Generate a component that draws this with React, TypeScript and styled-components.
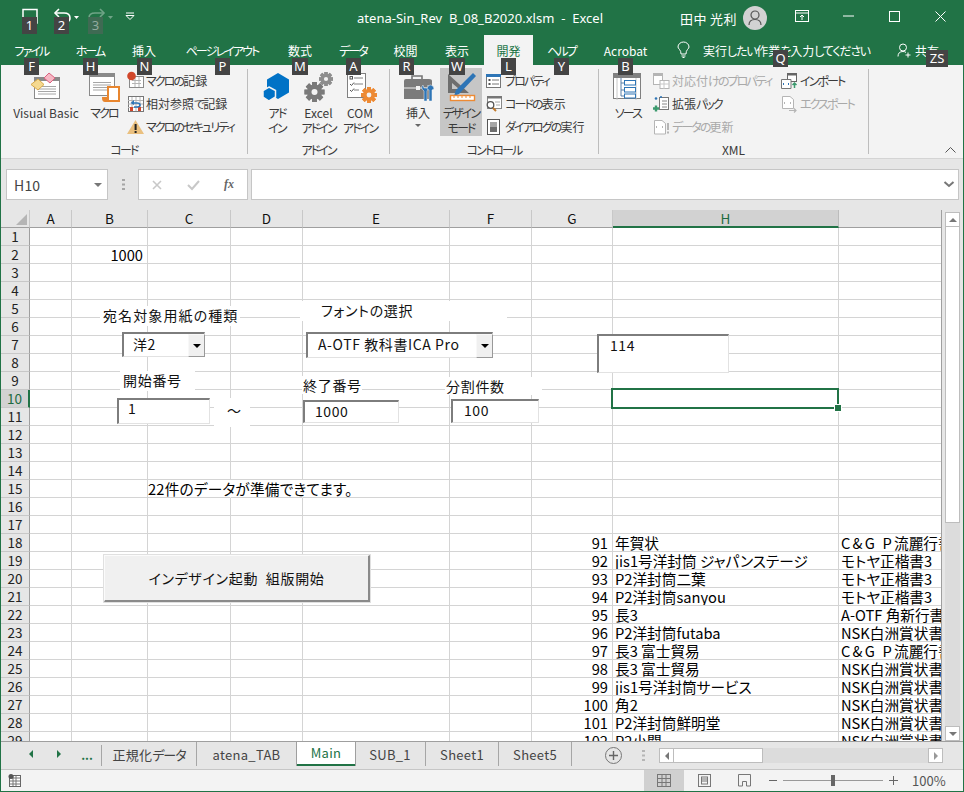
import React from "react";
import styled, { createGlobalStyle, css } from "styled-components";

const GREEN = "#217346";
const UI = `"Noto Sans CJK JP","Noto Sans",sans-serif`;

const Global = createGlobalStyle`
  html, body { margin: 0; padding: 0; background: #fff; }
  * { box-sizing: border-box; }
  body { font-family: ${UI}; font-feature-settings: "palt"; }
  svg { display: block; overflow: visible; }
`;

const Win = styled.div`
  position: relative; width: 964px; height: 792px; overflow: hidden;
  border: solid ${GREEN}; border-width: 0 1px 1px 1px;
  display: flex; flex-direction: column; background: #e6e6e6;
`;

/* kana in the ribbon's UI face are narrower than the kanji */
const NarrowRun = styled.span`letter-spacing: -1.9px;`;
const N = ({ children }: { children: string }) => (
  <>
    {children.split(/([ァ-ヶーぁ-ゖ]+)/).map((s, i) => (i % 2 ? <NarrowRun key={i}>{s}</NarrowRun> : s))}
  </>
);

/* ---------- title bar ---------- */
const TitleBar = styled.div`
  height: 36px; background: ${GREEN}; color: #fff; flex: none;
  display: grid; grid-template-columns: 356px 323px 1fr; align-items: center;
`;
const Qat = styled.div`display: flex; align-items: center; padding: 0 0 4px 21px;`;
const QatBtn = styled.div<{ $w: number; $faded?: boolean }>`
  width: ${p => p.$w}px; display: flex; align-items: center; opacity: ${p => (p.$faded ? 0.35 : 1)};
`;
const TitleText = styled.div`
  font: 13px "Noto Sans", sans-serif; white-space: pre; letter-spacing: 0.02px; padding-bottom: 1px;
`;
const TitleRight = styled.div`display: flex; align-items: center; justify-content: flex-start;`;
const UserName = styled.div`font-size: 13px; width: 63px; letter-spacing: 0.4px; white-space: pre;`;
const Avatar = styled.div`
  width: 24px; height: 24px; border-radius: 50%; background: #d2d2d2; margin-right: 12px;
  display: flex; align-items: center; justify-content: center;
`;
const WinBtn = styled.div`width: 46px; height: 36px; display: flex; align-items: center; justify-content: center; padding-bottom: 4px;`;

/* ---------- ribbon tabs ---------- */
const TabRow = styled.div`
  height: 29px; background: ${GREEN}; color: #fff; display: flex; flex: none; font-size: 12px; position: relative;
`;
const RTab = styled.div<{ $w: number; $active?: boolean }>`
  width: ${p => p.$w}px; height: 29px; display: flex; align-items: center; justify-content: center; white-space: pre; padding-bottom: 1px;
  ${p => p.$active && css`
    background: #f3f3f3; color: ${GREEN}; height: 30px; margin-top: -1px; padding-bottom: 0; margin-left: 1px;
  `}
`;
const TellMe = styled.div`
  display: flex; align-items: center; margin-left: 16px; width: 220px; white-space: pre; padding-bottom: 1px;
`;
const TellText = styled.span`margin-left: 13px;`;
const TellKana = styled.span`letter-spacing: -1.2px;`;
const Share = styled.div`display: flex; align-items: center; gap: 4px; padding-bottom: 1px;`;

/* ---------- ribbon ---------- */
const Ribbon = styled.div`
  height: 94px; flex: none; background: #f3f3f3; border-bottom: 1px solid #d4d4d4;
  display: flex; padding-top: 4px; color: #3a3a3a; font-size: 12px; position: relative;
`;
const Group = styled.div<{ $w: number }>`
  width: ${p => p.$w}px; height: 85px; border-right: 1px solid #bdbdbd;
  display: flex; flex-direction: column; flex: none;
`;
const GroupBody = styled.div<{ $pad: number }>`
  height: 74px; display: flex; padding-left: ${p => p.$pad}px;
`;
const GroupLabel = styled.div`
  height: 11px; line-height: 13px; text-align: center; font-size: 12px; white-space: pre;
`;
const Large = styled.div<{ $w: number; $on?: boolean; $mr?: number }>`
  width: ${p => p.$w}px; height: 68px; flex: none; display: flex; flex-direction: column; align-items: center;
  margin-top: -1px; margin-right: ${p => p.$mr ?? 0}px;
  ${p => p.$on && css`background: #c6c6c6;`}
`;
const LargeIcon = styled.div`height: 37px; width: 100%; display: flex; justify-content: center; padding-top: 2px;`;
const LargeLabel = styled.div`line-height: 15px; text-align: center; white-space: pre;`;
const Caret = styled.div`
  width: 0; height: 0; border: 3px solid transparent; border-top: 3px solid #666; border-bottom: 0; margin-top: 4px;
`;
const Stack = styled.div<{ $w?: number; $ml?: number }>`
  display: flex; flex-direction: column; margin-left: ${p => p.$ml ?? 0}px;
  ${p => p.$w && css`width: ${p.$w}px;`}
`;
const SmallRow = styled.div<{ $off?: boolean }>`
  height: 23px; display: flex; align-items: center; white-space: nowrap; gap: 3px;
  color: ${p => (p.$off ? "#a9a9a9" : "#3a3a3a")};
`;
const Collapse = styled.div`position: absolute; right: 7px; bottom: 5px;`;

/* ---------- key tips ---------- */
const Tip = styled.div<{ $x: number; $y: number; $w: number; $faded?: boolean }>`
  position: absolute; left: ${p => p.$x - 1}px; top: ${p => p.$y}px; width: ${p => p.$w}px; height: 17px;
  background: #444; color: #fff; font: 13px/17px "Noto Sans", sans-serif; text-align: center;
  ${p => p.$faded && css`background: #3f6a53; color: #93ab9f;`}
  z-index: 5;
`;

/* ---------- formula bar ---------- */
const FormulaBar = styled.div`
  height: 51px; flex: none; background: #e6e6e6; padding: 10px 4px 0 5px; display: flex; align-items: flex-start;
`;
const NameBox = styled.div`
  width: 102px; height: 31px; background: #fff; border: 1px solid #c6c6c6; display: flex; align-items: center;
  justify-content: space-between; padding: 0 5px 0 7px; font-size: 14px; color: #444; letter-spacing: 0.2px;
`;
const DownCaret = styled.div`width: 0; height: 0; border: 4px solid transparent; border-top: 4px solid #777; border-bottom: 0;`;
const GripZone = styled.div`width: 30px; height: 31px; display: flex; align-items: center; justify-content: center;`;
const FxBox = styled.div`
  width: 110px; height: 31px; background: #fff; border: 1px solid #c6c6c6; display: flex; align-items: center; margin-right: 3px;
`;
const FxSlot = styled.div`width: 36px; display: flex; justify-content: center;`;
const FxText = styled.span`font: italic 700 12px "Liberation Serif", serif; color: #666;`;
const FormulaInput = styled.div`
  flex: 1; height: 31px; background: #fff; border: 1px solid #c6c6c6; display: flex; align-items: center; justify-content: flex-end; padding-right: 3px;
`;

/* ---------- sheet ---------- */
const SheetZone = styled.div`
  height: 532px; flex: none; display: flex; position: relative; background: #e6e6e6; border-bottom: 1px solid #9f9f9f;
`;
const Grid = styled.div`
  width: 941px; height: 531px; overflow: hidden; flex: none; border-right: 1px solid #9f9f9f;
  display: grid; grid-template-columns: 29px 42px 76px 83px 72px 147px 82px 81px 226px 103px;
  grid-auto-rows: 18px; background: #fff; color: #000;
`;
const ColHead = styled.div<{ $sel?: boolean }>`
  background: ${p => (p.$sel ? "#d2d2d2" : "#e6e6e6")}; color: ${p => (p.$sel ? "#1d6a40" : "#111")};
  border-right: 1px solid ${p => (p.$sel ? "#bcbcbc" : "#c8c8c8")};
  border-bottom: ${p => (p.$sel ? `2px solid ${GREEN}` : "1px solid #9f9f9f")};
  font-size: 13.5px; line-height: 17px; text-align: center;
`;
const Corner = styled.div`
  background: #e6e6e6; border-right: 1px solid #c8c8c8; border-bottom: 1px solid #9f9f9f; position: relative;
  display: flex; align-items: flex-end; justify-content: flex-end; padding: 0 2px 2px 0;
`;
const CornerTri = styled.div`width: 0; height: 0; border-style: solid; border-width: 0 0 11px 11px; border-color: transparent transparent #b5b5b5 transparent;`;
const RowHead = styled.div<{ $sel?: boolean }>`
  background: ${p => (p.$sel ? "#d2d2d2" : "#e6e6e6")}; color: ${p => (p.$sel ? "#1d6a40" : "#222")};
  border-right: ${p => (p.$sel ? `2px solid ${GREEN}` : "1px solid #9f9f9f")};
  border-bottom: 1px solid #c8c8c8;
  font-size: 13.5px; line-height: 17px; text-align: center;
`;
const Cell = styled.div<{ $right?: boolean; $spill?: boolean }>`
  border-right: 1px solid ${p => (p.$spill ? "transparent" : "#d4d4d4")}; border-bottom: 1px solid #d4d4d4;
  font-size: 14.67px; line-height: 18px; white-space: pre; padding: 0 ${p => (p.$right ? 4 : 2)}px 0 ${p => (p.$spill ? 0 : 2)}px;
  text-align: ${p => (p.$right ? "right" : "left")};
  overflow: ${p => (p.$spill ? "visible" : "hidden")}; position: relative;
`;
const WideLatin = styled.span`letter-spacing: 2.2px;`;
const SpillText = styled.span`letter-spacing: 0.2px;`;

/* over-the-sheet form controls */
const Float = styled.div<{ $x: number; $y: number; $w: number; $h: number }>`
  position: absolute; left: ${p => p.$x - 1}px; top: ${p => p.$y - 210}px; width: ${p => p.$w}px; height: ${p => p.$h}px;
`;
const FormLabel = styled(Float)<{ $pl: number; $ls?: number }>`
  background: #fff; color: #111; font-size: 14px; line-height: 18px; padding-left: ${p => p.$pl}px; white-space: nowrap; letter-spacing: ${p => p.$ls ?? 0.7}px;
`;
const Inset = styled(Float)`
  background: #fff; color: #111; font-size: 14px; white-space: nowrap;
  border-style: solid; border-width: 2px 1px 1px 2px; border-color: #7d7d7d #e2e2e2 #e2e2e2 #7d7d7d;
`;
const FieldText = styled.div<{ $pl: number; $lh?: number }>`padding-left: ${p => p.$pl}px; letter-spacing: 0.6px; line-height: ${p => p.$lh ?? 18}px;`;
const ComboBtn = styled.div`
  position: absolute; right: -1px; top: 0; bottom: -1px; width: 17px; background: #f0f0f0; border: 1px solid;
  border-color: #f8f8f8 #999 #999 #f8f8f8; display: flex; align-items: center; justify-content: center;
`;
const BlackCaret = styled.div`width: 0; height: 0; border: 4px solid transparent; border-top: 4px solid #000; border-bottom: 0;`;
const BigButton = styled(Float)`
  background: #f0f0f0; border-style: solid; border-width: 1px 2px 2px 1px; border-color: #fbfbfb #8a8a8a #8a8a8a #fbfbfb;
  box-shadow: 0 0 0 1px #e0e0e0; display: flex; align-items: center; justify-content: center; font-size: 14px; color: #111; white-space: pre; letter-spacing: 0.7px;
`;
const Selection = styled(Float)`
  border: 2px solid ${GREEN}; background: transparent;
`;
const Handle = styled.div`
  position: absolute; right: -4px; bottom: -4px; width: 6px; height: 6px; background: ${GREEN}; border: 1px solid #fff; box-sizing: content-box; margin: -1px;
`;

const VScroll = styled.div`
  position: absolute; left: 944px; top: 2px; width: 15px; height: 529px; display: flex; flex-direction: column; background: #dcdcdc;
`;
const ScrollEnd = styled.div`
  flex: none; width: 15px; height: 15px; background: #fff; border: 1px solid #bdbdbd; display: flex; align-items: center; justify-content: center;
`;
const UpTri = styled.div`width: 0; height: 0; border: 4px solid transparent; border-bottom: 4px solid #777; border-top: 0;`;
const DownTri = styled.div`width: 0; height: 0; border: 4px solid transparent; border-top: 4px solid #777; border-bottom: 0;`;
const VThumb = styled.div`height: 296px; flex: none; background: #fff; border: 1px solid #bdbdbd; border-top: 0;`;
const VTrack = styled.div`flex: 1;`;

/* ---------- sheet tabs ---------- */
const TabBar = styled.div`
  height: 28px; flex: none; background: #e6e6e6; border-bottom: 1px solid #c6c6c6; display: flex; align-items: flex-start; color: #444; padding-left: 15px;
`;
const NavBtn = styled.div<{ $w: number }>`
  width: ${p => p.$w}px; height: 22px; margin-top: 1px; display: flex; align-items: center; justify-content: center; color: ${GREEN}; font-weight: 700; font-size: 12px;
`;
const TriL = styled.div`width: 0; height: 0; border: 4px solid transparent; border-right: 4px solid ${GREEN}; border-left: 0;`;
const TriR = styled.div`width: 0; height: 0; border: 4px solid transparent; border-left: 4px solid ${GREEN}; border-right: 0;`;
const SheetTab = styled.div<{ $w: number; $active?: boolean }>`
  width: ${p => p.$w}px; flex: none; height: 24px; display: flex; align-items: center; justify-content: center; font-size: 13px; margin-top: 0; letter-spacing: 0.3px;
  border-right: 1px solid #a6a6a6;
  ${p => p.$active && css`
    background: #fff; color: ${GREEN}; border-right: 0; border-bottom: 2px solid ${GREEN}; margin-top: -1px; height: 25px; box-shadow: -1px 0 0 #9f9f9f, 1px 0 0 #9f9f9f;
  `}
`;
const TabKana = styled.span`letter-spacing: -1px;`;
const FirstSep = styled.div`width: 1px; height: 21px; margin-top: 3px; background: #a6a6a6; flex: none;`;
const AddBtn = styled.div`
  margin-left: 33px; margin-top: 5px; width: 17px; height: 17px; border-radius: 50%; border: 1px solid #777; color: #555;
  display: flex; align-items: center; justify-content: center; flex: none;
`;
const Grip = styled.div`margin-left: 20px; margin-top: 8px; flex: none;`;
const HScroll = styled.div`
  margin-left: 14px; margin-top: 6px; width: 284px; height: 15px; background: #dcdcdc; display: flex; flex: none;
`;
const HEnd = styled.div`flex: none; width: 15px; height: 15px; background: #fff; border: 1px solid #bdbdbd; display: flex; align-items: center; justify-content: center;`;
const HThumb = styled.div`flex: none; width: 89px; background: #fff; border: 1px solid #bdbdbd; border-left: 0;`;
const HTrack = styled.div`flex: 1;`;
const SmTriL = styled.div`width: 0; height: 0; border: 4px solid transparent; border-right: 4px solid #777; border-left: 0;`;
const SmTriR = styled.div`width: 0; height: 0; border: 4px solid transparent; border-left: 4px solid #999; border-right: 0;`;

/* ---------- status bar ---------- */
const Status = styled.div`
  flex: 1; background: #f3f3f3; display: flex; align-items: center; color: #555; padding-left: 7px; font-size: 13px;
`;
const StatusSpacer = styled.div`flex: 1;`;
const ViewBtn = styled.div<{ $on?: boolean }>`
  width: 40px; height: 21px; display: flex; align-items: center; justify-content: center; background: ${p => (p.$on ? "#d0d0d0" : "transparent")};
`;
const Zoom = styled.div`display: flex; align-items: center; margin-left: 5px;`;
const ZoomBar = styled.div`width: 100px; height: 1px; background: #999; margin: 0 6px; position: relative; display: flex; justify-content: center; align-items: center;`;
const ZoomKnob = styled.div`width: 4px; height: 11px; background: #666;`;
const Percent = styled.div`width: 53px; margin-left: 12px; font-size: 13px; padding-left: 2px; color: #555;`;

/* ---------- icons ---------- */
const Ic = ({ w = 16, h = 16, children }: { w?: number; h?: number; children: React.ReactNode }) => (
  <svg width={w} height={h} viewBox={`0 0 ${w} ${h}`}>{children}</svg>
);

const Gear = ({ cx, cy, r, c, hole = "#f3f3f3" }: { cx: number; cy: number; r: number; c: string; hole?: string }) => {
  const teeth = Array.from({ length: 8 }, (_, i) => i * 45);
  const tw = r * 0.48;
  return (
    <g>
      {teeth.map(a => (
        <rect key={a} x={cx - tw / 2} y={cy - r} width={tw} height={r * 2} fill={c} transform={`rotate(${a} ${cx} ${cy})`} />
      ))}
      <circle cx={cx} cy={cy} r={r * 0.55} fill="none" stroke={c} strokeWidth={r * 0.4} />
      <circle cx={cx} cy={cy} r={r * 0.3} fill={hole} />
    </g>
  );
};

const TableLines = ({ x, y, w, h, c = "#a6a6a6" }: { x: number; y: number; w: number; h: number; c?: string }) => {
  const rows = 4;
  return (
    <g stroke={c} strokeWidth="1">
      {Array.from({ length: rows }, (_, i) => (
        <line key={i} x1={x + 3} x2={x + w - 3} y1={y + 2.5 + (i * (h - 4)) / rows} y2={y + 2.5 + (i * (h - 4)) / rows} />
      ))}
    </g>
  );
};

const VbIcon = () => (
  <Ic w={32} h={32}>
    <rect x="4.5" y="7.5" width="25" height="21" fill="#fff" stroke="#8a8a8a" />
    <rect x="4" y="7" width="26" height="4" fill="#8a8a8a" />
    <TableLines x={5} y={14} w={24} h={14} />
    <path d="M8 9 L14 14.5 L8 20 L1 14.5Z" fill="#f5d98f" stroke="#d9a948" />
    <path d="M19 3 L25 8 L20 13 L14 8Z" fill="#f7b7c4" stroke="#d9627f" />
  </Ic>
);
const MacroIcon = () => (
  <Ic w={32} h={32}>
    <rect x="1.5" y="3.5" width="25" height="22" fill="#fff" stroke="#8a8a8a" />
    <rect x="1" y="3" width="26" height="4" fill="#8a8a8a" />
    <TableLines x={2} y={10} w={24} h={14} />
    <path d="M20 17 H31 V31 H17 Q15 31 15 28 H19 Q20 28 20 26Z" fill="#fff" stroke="#e8862f" strokeWidth="2" />
    <rect x="15" y="27" width="6" height="4" fill="#e8862f" />
  </Ic>
);
const RecIcon = () => (
  <Ic>
    <rect x="2.5" y="3.5" width="14" height="11" fill="#fff" stroke="#8a8a8a" />
    <path d="M5 7.5h9M5 10.5h9M8 4v10M12 4v10" stroke="#b5b5b5" fill="none" />
    <circle cx="4.5" cy="3" r="4.3" fill="#d1462a" />
  </Ic>
);
const RelIcon = () => (
  <Ic>
    <rect x="1.5" y="0.5" width="15" height="15" fill="#fff" stroke="#777" />
    <path d="M1 4.5h15M1 8h15M1 11.5h15M5 1v14M9 1v14M13 1v14" stroke="#b5b5b5" fill="none" />
    <rect x="3" y="11" width="3" height="4" fill="#d1462a" />
    <rect x="11" y="11" width="3" height="4" fill="#d1462a" />
    <path d="M5 7 H10 Q13 7 13 9 Q13 11 10 11 H7" fill="none" stroke="#2e75b6" strokeWidth="1.6" />
    <path d="M7 4 L3.5 7 L7 9Z" fill="#2e75b6" />
  </Ic>
);
const WarnIcon = () => (
  <Ic>
    <path d="M8.5 1 L17 15 H0Z" fill="#eac07f" />
    <rect x="7.6" y="5" width="2" height="6" fill="#222" />
    <rect x="7.6" y="12" width="2" height="2" fill="#222" />
  </Ic>
);
const AddinIcon = () => (
  <Ic w={32} h={32}>
    <path d="M17 3 L28 9.5 V22.5 L17 29 L6 22.5 V9.5Z" fill="#0072c6" />
    <path d="M8 17 L14.5 20.5 V27 L8 31 L2 27 V20.5Z" fill="#0072c6" stroke="#f3f3f3" strokeWidth="1.5" />
  </Ic>
);
const GearsIcon = () => (
  <Ic w={32} h={32}>
    <Gear cx={11.5} cy={22} r={10} c="#7a7a7a" />
    <Gear cx={23} cy={9} r={7} c="#8e8e8e" />
  </Ic>
);
const ComIcon = () => (
  <Ic w={32} h={32}>
    <rect x="3.5" y="3.5" width="18" height="24" fill="#fff" stroke="#808080" />
    <path d="M10 8h9M10 14h9M10 20h5" stroke="#808080" fill="none" />
    <rect x="6" y="6.5" width="2.5" height="2.5" fill="none" stroke="#555" />
    <path d="M6 14l1.5 1.5L10 12.5M6 20l1.5 1.5L10 18.5" stroke="#555" fill="none" />
    <Gear cx={25} cy={25} r={8} c="#ed8a34" />
  </Ic>
);
const ToolboxIcon = () => (
  <Ic w={34} h={32}>
    <path d="M11 9 V6 H21 V9" fill="none" stroke="#777" strokeWidth="1.6" />
    <path d="M3 11 Q3 9 5 9 H28 Q31 9 31 11 V29 H3Z" fill="#7b7b7b" />
    <path d="M3 18 H31" stroke="#f3f3f3" strokeWidth="1" />
    <rect x="15" y="16" width="4" height="4" fill="#f3f3f3" />
    <path d="M22 15 q-3 3 1 6 v10 h3 v-10 q3 -3 1 -6 v3 h-4z" fill="#2e75b6" stroke="#f3f3f3" strokeWidth=".5" />
    <path d="M30 15 q3 1 3 4 l-2 1 v11 h-3 v-11 l-2 -1 q0 -3 3 -4z" fill="#2e75b6" stroke="#f3f3f3" strokeWidth=".5" />
  </Ic>
);
const DesignIcon = () => (
  <Ic w={32} h={32}>
    <path d="M3 4 L24 23 H3Z M7 13 V19 H14Z" fill="#6e6e6e" fillRule="evenodd" />
    <path d="M28 3 L31 6 L14 24 L9 26 L11 20Z" fill="#2e75b6" />
    <rect x="5.5" y="25.5" width="24" height="5" fill="#fff" stroke="#ed8a34" strokeWidth="1.4" />
    <path d="M9 26v2M13 26v2M17 26v2M21 26v2M25 26v2" stroke="#ed8a34" />
  </Ic>
);
const PropsIcon = () => (
  <Ic>
    <rect x=".5" y="1.5" width="14" height="13" fill="#fff" stroke="#777" />
    <rect x="0" y="1" width="15" height="3" fill="#2e75b6" />
    <rect x="2.5" y="6" width="2" height="2" fill="#555" />
    <rect x="2.5" y="10" width="2" height="2" fill="#555" />
    <path d="M6 7h7M6 11h7" stroke="#777" />
  </Ic>
);
const CodeIcon = () => (
  <Ic>
    <rect x="1.5" y=".5" width="14" height="12" fill="#fff" stroke="#888" />
    <rect x="1" y="0" width="15" height="2.5" fill="#777" />
    <circle cx="4.5" cy="9" r="3.3" fill="#fff" stroke="#555" strokeWidth="1.3" />
    <path d="M7 12 L10 15" stroke="#c17a2c" strokeWidth="2" />
    <path d="M9 6h5M10 9h4" stroke="#aaa" />
  </Ic>
);
const DialogIcon = () => (
  <Ic>
    <rect x="1.5" y=".5" width="12" height="15" fill="#fff" stroke="#555" />
    <rect x="4" y="3" width="7" height="10" fill="#a6a6a6" />
    <rect x="4" y="8" width="7" height="5" fill="#6e6e6e" />
  </Ic>
);
const SourceIcon = () => (
  <Ic w={32} h={32}>
    <rect x="1.5" y="3.5" width="27" height="25" fill="#fff" stroke="#808080" />
    <rect x="1" y="3" width="28" height="5" fill="#808080" />
    <path d="M5 8v22M24 8v22" stroke="#c8c8c8" />
    <path d="M9 8 V26 H12 M9 13 H12 M9 20 H12" fill="none" stroke="#5b7fa5" />
    <rect x="12.5" y="10.5" width="11" height="4.5" fill="#fff" stroke="#2e75b6" />
    <rect x="12.5" y="17.5" width="11" height="4.5" fill="#fff" stroke="#2e75b6" />
    <rect x="12.5" y="24" width="11" height="4" fill="#fff" stroke="#2e75b6" />
  </Ic>
);
const MapIcon = () => (
  <Ic>
    <rect x=".5" y=".5" width="9" height="11" fill="#fff" stroke="#b5b5b5" />
    <rect x="0" y="0" width="10" height="3" fill="#b5b5b5" />
    <rect x="7" y="7.5" width="9" height="8" fill="#fff" stroke="#b5b5b5" />
    <path d="M7 11h9M11 8v8" stroke="#c8c8c8" />
  </Ic>
);
const PackIcon = () => (
  <Ic>
    <rect x="6.5" y="1.5" width="9" height="12" fill="#fff" stroke="#777" />
    <path d="M9 5h5M9 8h5M9 11h5" stroke="#888" />
    <circle cx="3" cy="2.5" r="1.3" fill="#2e75b6" />
    <circle cx="8" cy="1" r="1" fill="#2e75b6" />
    <path d="M0 12.5h6M3 9.5v6" stroke="#3c9a6e" strokeWidth="2.4" />
  </Ic>
);
const RefreshIcon = () => (
  <Ic>
    <path d="M1.5 1.5 H9 L12.5 4.5 V15 H1.5Z" fill="#fff" stroke="#b5b5b5" />
    <path d="M4 7 l-1 1 l1 1M9 7 l1 1 l-1 1" stroke="#b5b5b5" fill="none" />
    <rect x="14" y="4" width="2" height="7" fill="#b5b5b5" />
    <rect x="14" y="12.5" width="2" height="2" fill="#b5b5b5" />
  </Ic>
);
const ImportIcon = () => (
  <Ic>
    <rect x="6.5" y=".5" width="9" height="8" fill="#fff" stroke="#666" />
    <rect x="6" y="0" width="10" height="2.5" fill="#666" />
    <path d="M0.5 6.5 H10 V15.5 H0.5Z" fill="#fff" stroke="#777" />
    <path d="M3 10l-1 1 1 1M7 10l1 1-1 1" stroke="#2e75b6" fill="none" />
    <path d="M13.5 15 V10 M11.5 12 L13.5 10 L15.5 12" stroke="#3c9a6e" fill="none" strokeWidth="1.5" />
  </Ic>
);
const ExportIcon = () => (
  <Ic>
    <path d="M1.5 .5 H9 L12.5 3.5 V12.5 H1.5Z" fill="#fff" stroke="#b5b5b5" />
    <path d="M4 6l-1 1 1 1M9 6l1 1-1 1" stroke="#b5b5b5" fill="none" />
    <path d="M8 14.5 H15 M13 12.5 L15 14.5 L13 16.5" stroke="#b5b5b5" fill="none" strokeWidth="1.2" />
  </Ic>
);

const tips: [string, number, number, number, boolean?][] = [
  ["1", 22, 17, 15], ["2", 54, 17, 15], ["3", 88, 17, 15, true],
  ["F", 24, 58, 15], ["H", 83, 58, 15], ["N", 137, 58, 15], ["P", 215, 58, 15],
  ["M", 292, 58, 16], ["A", 346, 58, 15], ["R", 399, 58, 15], ["W", 449, 58, 16],
  ["L", 501, 58, 15], ["Y", 554, 58, 15], ["B", 618, 58, 15], ["Q", 773, 50, 15], ["ZS", 926, 50, 22],
];

const ribbonTabs: [string, number, boolean?][] = [
  ["ファイル", 61], ["ホーム", 56], ["挿入", 52], ["ページ レイアウト", 104], ["数式", 52], ["データ", 54],
  ["校閲", 51], ["表示", 52], ["開発", 49, true], ["ヘルプ", 57], ["Acrobat", 71],
];

const columns = ["A", "B", "C", "D", "E", "F", "G", "H", ""];
const CG = () => <><WideLatin>C&G P</WideLatin>流麗行書</>;
const dataRows: [string, string, React.ReactNode][] = [
  ["91", "年賀状", <CG />],
  ["92", "jis1号洋封筒 ジャパンステージ", "モトヤ正楷書3"],
  ["93", "P2洋封筒二葉", "モトヤ正楷書3"],
  ["94", "P2洋封筒sanyou", "モトヤ正楷書3"],
  ["95", "長3", "A-OTF 角新行書"],
  ["96", "P2洋封筒futaba", "NSK白洲賞状書体"],
  ["97", "長3 富士貿易", <CG />],
  ["98", "長3 富士貿易", "NSK白洲賞状書体"],
  ["99", "jis1号洋封筒サービス", "NSK白洲賞状書体"],
  ["100", "角2", "NSK白洲賞状書体"],
  ["101", "P2洋封筒鮮明堂", "NSK白洲賞状書体"],
  ["102", "P2小関", "NSK白洲賞状書体"],
];

const cellContent = (r: number, c: number): { t: React.ReactNode; right?: boolean; spill?: boolean } => {
  if (r === 2 && c === 1) return { t: "1000", right: true };
  if (r === 15 && c === 2) return { t: <SpillText>22件のデータが準備できてます。</SpillText>, spill: true };
  if (r === 15 && c === 3) return { t: "", spill: true };
  if (r >= 18) {
    const d = dataRows[r - 18];
    if (c === 6) return { t: d[0], right: true };
    if (c === 7) return { t: d[1] };
    if (c === 8) return { t: d[2] };
  }
  return { t: "" };
};

export default function App() {
  const rows = Array.from({ length: 29 }, (_, i) => i + 1);
  return (
    <Win>
      <Global />
      <TitleBar>
        <Qat>
          <QatBtn $w={31}>
            <Ic><path d="M1 1.5 H15 V15 H1Z" fill="none" stroke="#fff" strokeWidth="1.5" /></Ic>
          </QatBtn>
          <QatBtn $w={35}>
            <Ic w={26} h={16}>
              <path d="M2 5 H11 Q17 5 17 10 Q17 13 14 14" fill="none" stroke="#fff" strokeWidth="1.6" />
              <path d="M6 1 L2 5 L6 9" fill="none" stroke="#fff" strokeWidth="1.6" />
              <path d="M21 8 h5 l-2.5 3z" fill="#fff" />
            </Ic>
          </QatBtn>
          <QatBtn $w={37} $faded>
            <Ic w={26} h={16}>
              <path d="M16 5 H7 Q1 5 1 10 Q1 13 4 14" fill="none" stroke="#fff" strokeWidth="1.6" />
              <path d="M12 1 L16 5 L12 9" fill="none" stroke="#fff" strokeWidth="1.6" />
              <path d="M20 8 h5 l-2.5 3z" fill="#fff" />
            </Ic>
          </QatBtn>
          <QatBtn $w={12}>
            <Ic w={10} h={10}>
              <path d="M1 2h8" stroke="#fff" />
              <path d="M1 4.5h8l-4 4z" fill="none" stroke="#fff" />
            </Ic>
          </QatBtn>
        </Qat>
        <TitleText>{"atena-Sin_Rev  B_08_B2020.xlsm  -  Excel"}</TitleText>
        <TitleRight>
          <UserName>{"田中 光利"}</UserName>
          <Avatar>
            <Ic w={14} h={16}>
              <circle cx="7" cy="5" r="4" fill="none" stroke="#555" strokeWidth="1.2" />
              <path d="M1 15 Q1 9.5 7 9.5 Q13 9.5 13 15" fill="none" stroke="#555" strokeWidth="1.2" />
            </Ic>
          </Avatar>
          <WinBtn>
            <Ic w={14} h={12}>
              <rect x=".5" y=".5" width="13" height="11" fill="none" stroke="#fff" />
              <path d="M1 3h12" stroke="#fff" />
              <path d="M7 10V5M5 7l2-2 2 2" stroke="#fff" fill="none" />
            </Ic>
          </WinBtn>
          <WinBtn><Ic w={11} h={2}><path d="M0 1h11" stroke="#fff" /></Ic></WinBtn>
          <WinBtn><Ic w={11} h={11}><rect x=".5" y=".5" width="10" height="10" fill="none" stroke="#fff" /></Ic></WinBtn>
          <WinBtn><Ic w={11} h={11}><path d="M.5.5l10 10M10.5.5l-10 10" stroke="#fff" /></Ic></WinBtn>
        </TitleRight>
      </TitleBar>

      <TabRow>
        {ribbonTabs.map(([t, w, a]) => <RTab key={t} $w={w} $active={a}><N>{t}</N></RTab>)}
        <TellMe>
          <Ic w={13} h={16}>
            <path d="M4 12 Q4 9 2.5 7.5 Q1 6 1 5 A5.5 5 0 0 1 12 5 Q12 6 10.5 7.5 Q9 9 9 12Z" fill="none" stroke="#fff" />
            <path d="M4.5 14h4M5.5 15.5h2" stroke="#fff" />
          </Ic>
          <TellText>実行<TellKana>したい</TellKana>作業<TellKana>を</TellKana>入力<TellKana>してください</TellKana></TellText>
        </TellMe>
        <Share>
          <Ic w={14} h={15}>
            <circle cx="6" cy="4.5" r="3.5" fill="none" stroke="#fff" />
            <path d="M1 13.5 Q1 8.5 6 8.5 Q8 8.5 9 9.5M11 9.5v5M8.5 12h5" fill="none" stroke="#fff" />
          </Ic>
          共有
        </Share>
      </TabRow>

      <Ribbon>
        <Group $w={247}>
          <GroupBody $pad={9}>
            <Large $w={72} $mr={4}><LargeIcon><VbIcon /></LargeIcon><LargeLabel>Visual Basic</LargeLabel></Large>
            <Large $w={36}><LargeIcon><MacroIcon /></LargeIcon><LargeLabel><N>マクロ</N></LargeLabel></Large>
            <Stack $ml={5}>
              <SmallRow><RecIcon /><span><N>マクロの記録</N></span></SmallRow>
              <SmallRow><RelIcon /><span><N>相対参照で記録</N></span></SmallRow>
              <SmallRow><WarnIcon /><span><N>マクロのセキュリティ</N></span></SmallRow>
            </Stack>
          </GroupBody>
          <GroupLabel><N>コード</N></GroupLabel>
        </Group>
        <Group $w={142}>
          <GroupBody $pad={8}>
            <Large $w={42}><LargeIcon><AddinIcon /></LargeIcon><LargeLabel><N>{"アド\nイン"}</N></LargeLabel></Large>
            <Large $w={41}><LargeIcon><GearsIcon /></LargeIcon><LargeLabel><N>{"Excel\nアドイン"}</N></LargeLabel></Large>
            <Large $w={42}><LargeIcon><ComIcon /></LargeIcon><LargeLabel><N>{"COM\nアドイン"}</N></LargeLabel></Large>
          </GroupBody>
          <GroupLabel><N>アドイン</N></GroupLabel>
        </Group>
        <Group $w={209}>
          <GroupBody $pad={6}>
            <Large $w={44}>
              <LargeIcon><ToolboxIcon /></LargeIcon>
              <LargeLabel>挿入</LargeLabel>
              <Caret />
            </Large>
            <Large $w={42} $on $mr={4}><LargeIcon><DesignIcon /></LargeIcon><LargeLabel><N>{"デザイン\nモード"}</N></LargeLabel></Large>
            <Stack>
              <SmallRow><PropsIcon /><span><N>プロパティ</N></span></SmallRow>
              <SmallRow><CodeIcon /><span><N>コードの表示</N></span></SmallRow>
              <SmallRow><DialogIcon /><span><N>ダイアログの実行</N></span></SmallRow>
            </Stack>
          </GroupBody>
          <GroupLabel><N>コントロール</N></GroupLabel>
        </Group>
        <Group $w={270}>
          <GroupBody $pad={11}>
            <Large $w={36} $mr={7}><LargeIcon><SourceIcon /></LargeIcon><LargeLabel><N>ソース</N></LargeLabel></Large>
            <Stack $w={128}>
              <SmallRow $off><MapIcon /><span><N>対応付けのプロパティ</N></span></SmallRow>
              <SmallRow><PackIcon /><span><N>拡張パック</N></span></SmallRow>
              <SmallRow $off><RefreshIcon /><span><N>データの更新</N></span></SmallRow>
            </Stack>
            <Stack>
              <SmallRow><ImportIcon /><span><N>インポート</N></span></SmallRow>
              <SmallRow $off><ExportIcon /><span><N>エクスポート</N></span></SmallRow>
            </Stack>
          </GroupBody>
          <GroupLabel>XML</GroupLabel>
        </Group>
        <Collapse>
          <Ic w={11} h={6}><path d="M.5 5.5 L5.5 .5 L10.5 5.5" fill="none" stroke="#555" /></Ic>
        </Collapse>
      </Ribbon>

      <FormulaBar>
        <NameBox>H10<DownCaret /></NameBox>
        <GripZone>
          <Ic w={3} h={11}><path d="M0 0h3v2H0zM0 4.5h3v2H0zM0 9h3v2H0z" fill="#a6a6a6" /></Ic>
        </GripZone>
        <FxBox>
          <FxSlot><Ic w={10} h={10}><path d="M1 1l8 8M9 1l-8 8" stroke="#c8c8c8" strokeWidth="1.6" /></Ic></FxSlot>
          <FxSlot><Ic w={13} h={10}><path d="M1 5l4 4L12 1" stroke="#c8c8c8" strokeWidth="2" fill="none" /></Ic></FxSlot>
          <FxSlot><FxText>fx</FxText></FxSlot>
        </FxBox>
        <FormulaInput>
          <Ic w={12} h={7}><path d="M1.5 1 L6 5 L10.5 1" stroke="#777" strokeWidth="2" fill="none" /></Ic>
        </FormulaInput>
      </FormulaBar>

      <SheetZone>
        <Grid>
          <Corner><CornerTri /></Corner>
          {columns.map((c, i) => <ColHead key={i} $sel={c === "H"}>{c}</ColHead>)}
          {rows.map(r => (
            <React.Fragment key={r}>
              <RowHead $sel={r === 10}>{r}</RowHead>
              {columns.map((_, c) => {
                const v = cellContent(r, c);
                return <Cell key={c} $right={v.right} $spill={v.spill}>{v.t}</Cell>;
              })}
            </React.Fragment>
          ))}
        </Grid>

        <FormLabel $x={100} $y={306} $w={140} $h={20} $pl={3} $ls={1.1}>宛名対象用紙の種類</FormLabel>
        <Inset $x={122} $y={332} $w={83} $h={25}><FieldText $pl={9} $lh={20}>洋2<ComboBtn><BlackCaret /></ComboBtn></FieldText></Inset>
        <FormLabel $x={300} $y={301} $w={207} $h={20} $pl={21}>フォントの選択</FormLabel>
        <Inset $x={306} $y={332} $w={187} $h={26}><FieldText $pl={10} $lh={20}>A-OTF 教科書ICA Pro<ComboBtn><BlackCaret /></ComboBtn></FieldText></Inset>
        <FormLabel $x={120} $y={371} $w={75} $h={20} $pl={3}>開始番号</FormLabel>
        <Inset $x={117} $y={398} $w={93} $h={26}><FieldText $pl={9} $lh={17}>1</FieldText></Inset>
        <FormLabel $x={214} $y={398} $w={36} $h={29} $pl={13}><TildeMark>〜</TildeMark></FormLabel>
        <FormLabel $x={302} $y={376} $w={60} $h={18} $pl={1}>終了番号</FormLabel>
        <Inset $x={303} $y={400} $w={96} $h={23}><FieldText $pl={10}>1000</FieldText></Inset>
        <FormLabel $x={445} $y={377} $w={97} $h={18} $pl={1}>分割件数</FormLabel>
        <Inset $x={451} $y={399} $w={88} $h={24}><FieldText $pl={11}>100</FieldText></Inset>
        <Inset $x={597} $y={334} $w={132} $h={39}><FieldText $pl={11}>114</FieldText></Inset>
        <BigButton $x={104} $y={555} $w={266} $h={47}>{"インデザイン起動  組版開始"}</BigButton>
        <Selection $x={611} $y={388} $w={228} $h={21}><Handle /></Selection>

        <VScroll>
          <ScrollEnd><UpTri /></ScrollEnd>
          <VThumb />
          <VTrack />
          <ScrollEnd><DownTri /></ScrollEnd>
        </VScroll>
      </SheetZone>

      <TabBar>
        <NavBtn $w={29}><TriL /></NavBtn>
        <NavBtn $w={28}><TriR /></NavBtn>
        <NavBtn $w={28}>...</NavBtn>
        <FirstSep />
        <SheetTab $w={95}><span>正規化<TabKana>データ</TabKana></span></SheetTab>
        <SheetTab $w={100}>atena_TAB</SheetTab>
        <SheetTab $w={58} $active>Main</SheetTab>
        <SheetTab $w={71}>SUB_1</SheetTab>
        <SheetTab $w={73}>Sheet1</SheetTab>
        <SheetTab $w={73}>Sheet5</SheetTab>
        <AddBtn><Ic w={9} h={9}><path d="M4.5 0v9M0 4.5h9" stroke="#666" strokeWidth="1.4" /></Ic></AddBtn>
        <Grip><Ic w={3} h={11}><path d="M0 0h3v2H0zM0 4.5h3v2H0zM0 9h3v2H0z" fill="#b5b5b5" /></Ic></Grip>
        <HScroll>
          <HEnd><SmTriL /></HEnd>
          <HThumb />
          <HTrack />
          <HEnd><SmTriR /></HEnd>
        </HScroll>
      </TabBar>

      <Status>
        <Ic w={13} h={13}>
          <rect x="1.5" y="1.5" width="11" height="11" fill="#fff" stroke="#666" />
          <path d="M2 4h10M2 7h10M2 10h10M5 2v10M8 2v10" stroke="#777" />
          <circle cx="3" cy="2.5" r="2.5" fill="#555" />
        </Ic>
        <StatusSpacer />
        <ViewBtn $on>
          <Ic w={14} h={13}>
            <rect x=".5" y=".5" width="13" height="12" fill="none" stroke="#777" />
            <path d="M5 1v11M9 1v11M1 4.5h12M1 8.5h12" stroke="#777" />
          </Ic>
        </ViewBtn>
        <ViewBtn>
          <Ic w={13} h={13}>
            <rect x=".5" y=".5" width="12" height="12" fill="none" stroke="#777" />
            <rect x="3.5" y="3" width="6" height="7" fill="none" stroke="#777" />
            <path d="M4 5h5M4 7h5" stroke="#777" />
          </Ic>
        </ViewBtn>
        <ViewBtn>
          <Ic w={13} h={13}>
            <path d="M.5 12V.5H12.5V12M.5 12h4V7.5h4V12h4" fill="none" stroke="#777" />
          </Ic>
        </ViewBtn>
        <Zoom>
          <Ic w={8} h={9}><path d="M0 4.5h8" stroke="#666" /></Ic>
          <ZoomBar><ZoomKnob /></ZoomBar>
          <Ic w={9} h={9}><path d="M0 4.5h9M4.5 0v9" stroke="#666" /></Ic>
        </Zoom>
        <Percent>100%</Percent>
      </Status>

      {tips.map(([t, x, y, w, f]) => <Tip key={t} $x={x} $y={y} $w={w} $faded={f}>{t}</Tip>)}
    </Win>
  );
}

const TildeMark = styled.span`position: relative; top: 3px; left: 0;`;
